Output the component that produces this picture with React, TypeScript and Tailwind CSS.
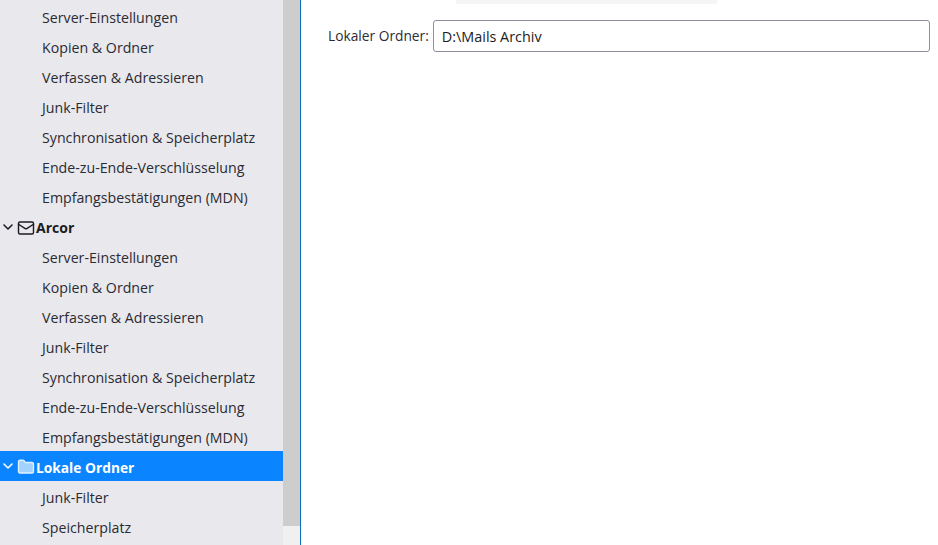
import { ChevronDown, Folder, Mail } from 'lucide-react';

const accountItems = [
    'Server-Einstellungen',
    'Kopien & Ordner',
    'Verfassen & Adressieren',
    'Junk-Filter',
    'Synchronisation & Speicherplatz',
    'Ende-zu-Ende-Verschlüsselung',
    'Empfangsbestätigungen (MDN)',
];

function SubItem({ label }: { label: string }) {
    return <div className="h-[30px] pl-[42px] text-[14.2px] leading-[34px] whitespace-nowrap text-[#2b2b33]">{label}</div>;
}

export default function App() {
    return (
        <div className="flex h-[545px] w-[938px] overflow-hidden bg-white font-['Open_Sans','Noto_Sans',sans-serif] text-[14px]">
            <div className="w-[283px] shrink-0 bg-[#e8e8ed] pt-[1px]">
                {accountItems.map((item) => (
                    <SubItem key={item} label={item} />
                ))}
                <div className="flex h-[30px] items-center font-bold text-[#1c1b22]">
                    <ChevronDown className="mt-[2px] h-[16px] w-[16px]" strokeWidth={2.4} />
                    <Mail className="mt-[4px] ml-[1px] h-[18px] w-[18px]" strokeWidth={1.9} />
                    <span className="mt-[2px] ml-[1px] text-[14px]">Arcor</span>
                </div>
                {accountItems.map((item) => (
                    <SubItem key={`arcor-${item}`} label={item} />
                ))}
                <div className="flex h-[30px] items-center bg-[#0a84ff] font-bold text-white">
                    <ChevronDown className="h-[16px] w-[16px]" strokeWidth={2.4} />
                    <Folder className="mt-[2px] ml-[1px] h-[18px] w-[18px] fill-[#a3d2ff] text-[#e2f1ff]" strokeWidth={1.8} />
                    <span className="mt-[4px] ml-[1px] text-[13.75px]">Lokale Ordner</span>
                </div>
                <SubItem label="Junk-Filter" />
                <SubItem label="Speicherplatz" />
            </div>
            <div className="flex w-[17px] shrink-0 flex-col bg-[#f0f0f0]">
                <div className="h-[526px] bg-[#cdcdcd]" />
            </div>
            <div className="w-px shrink-0 bg-[#0f6cbd]" />
            <div className="flex-1">
                <div className="ml-[155px] h-[4px] w-[261px] bg-[#f5f5f5]" />
                <div className="mt-[16px] flex items-center pl-[27px] pr-[8px]">
                    <span className="mr-[4px] text-[13.75px] whitespace-nowrap text-[#2b2b33]">Lokaler Ordner:</span>
                    <input
                        readOnly
                        value="D:\Mails Archiv"
                        className="h-[32px] flex-1 rounded-[3px] border border-[#8f8f9d] bg-white px-[8px] text-[14.4px] text-[#1c1b22] outline-none"
                    />
                </div>
            </div>
        </div>
    );
}
